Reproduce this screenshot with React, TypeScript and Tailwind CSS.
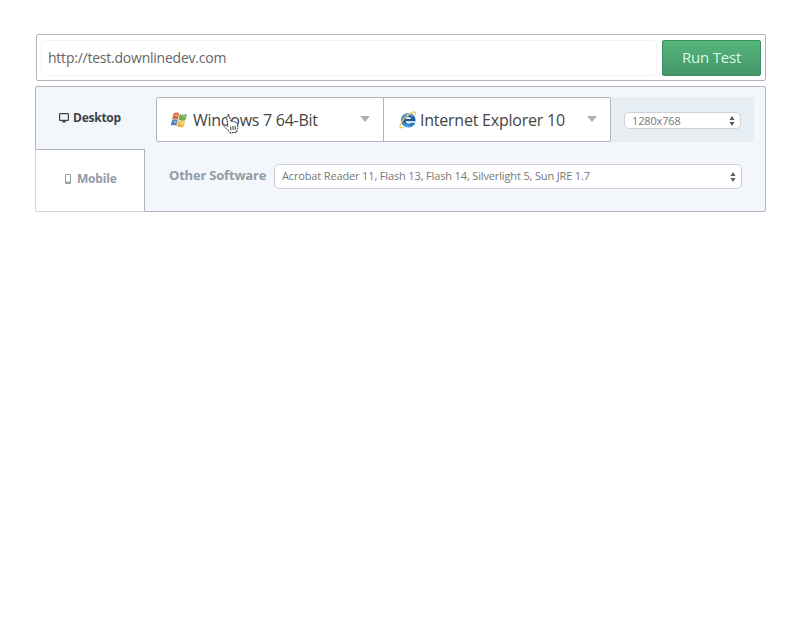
import React from "react";

function DesktopIcon() {
  return (
    <svg width="10" height="10" viewBox="0 0 10 10" fill="none" className="block shrink-0">
      <rect x="0.6" y="0.7" width="8.8" height="6.6" rx="0.4" stroke="#3d4247" strokeWidth="1.2" />
      <path d="M4 7.2h2v1.2h1.2v1H2.8v-1H4z" fill="#3d4247" />
    </svg>
  );
}

function MobileIcon() {
  return (
    <svg width="6" height="10" viewBox="0 0 6 10" fill="none" className="block shrink-0">
      <rect x="0.5" y="0.5" width="5" height="9" rx="0.4" stroke="#929ba6" />
      <path d="M0.5 7.5h5v1.600h-5z" fill="#929ba6" />
      <path d="M2.500 8h1v0.800h-1z" fill="#fff" />
    </svg>
  );
}

function WindowsIcon() {
  return (
    <svg width="16" height="16" viewBox="0 0 16 16" className="block shrink-0">
      <path d="M2.500 1.700C4.200.300 6.300.300 8.100 1.400L6.800 7.400C5 6.400 3 6.400 1.100 7.500z" fill="#dc6840" />
      <path d="M8.800 1.900c2.100 1.100 4.600 1.300 7.100.2L14.400 8.100c-2.200 1-4.900.8-7-.3z" fill="#77ac4b" />
      <path d="M1 8.100C2.800 7 4.900 6.900 6.600 7.900L5.300 13.700C3.600 12.600 1.700 12.700-.2 13.700z" fill="#4d80bd" />
      <path d="M7.300 8.400c2.100 1.100 4.500 1.300 6.800.4l-1.400 6c-2.400.9-4.900.5-6.900-.6z" fill="#efb83c" />
      <path d="M3.200 2.900c1.200-.7 2.500-.6 3.600-.1l-.5 2.200z" fill="#f3a684" />
      <path d="M9.500 3.300c1.500.6 3 .7 4.600.3l-.5 1.800z" fill="#a5cc78" />
      <path d="M1.900 9.200c1-.5 2.500-.5 3.500 0l-.6 2.200z" fill="#8fb8e0" />
      <path d="M8 9.800c1.500.6 3 .8 4.600.5l-.7 2.700z" fill="#ffe69a" />
    </svg>
  );
}

function ExplorerIcon() {
  return (
    <svg width="18" height="18" viewBox="0 0 18 18" fill="none" className="block shrink-0">
      <defs>
        <linearGradient id="ieBlue" x1="0" y1="0" x2="0" y2="1">
          <stop offset="0" stopColor="#4587c2" />
          <stop offset="0.45" stopColor="#17549b" />
          <stop offset="1" stopColor="#3b9bdd" />
        </linearGradient>
      </defs>
      <path
        d="M16.600 10.300H6.800c.1 1.500 1.200 2.300 2.700 2.300 1 0 1.800-.3 2.200-.9h4.600c-.9 3-3.500 4.800-6.800 4.800-4.300 0-7.300-3-7.300-7.200s3-7.200 7.300-7.200 7.200 3.100 7.100 8.200zM6.900 8h5.100c-.1-1.200-1.100-2-2.500-2S7 6.800 6.900 8z"
        fill="url(#ieBlue)"
      />
      <path d="M3.300 8.700C3.900 5.500 6.200 3.400 9.400 3.300c1.700 0 3.200.6 4.200 1.600" stroke="#8fc5ee" strokeWidth="1" />
      <path d="M4 12c1 2 3 3.200 5.500 3.200" stroke="#63b7ec" strokeWidth="0.9" />
      <path
        d="M16.200 4.300C17 2 16.200.7 14.300 1 10.400 1.800 3.900 8 1.700 12.900c-1.500 3.400-.4 4.900 3 3.100"
        stroke="#e9c766"
        strokeWidth="1.300"
      />
    </svg>
  );
}

function HandCursor() {
  return (
    <svg width="16" height="19" viewBox="0 0 16 19" className="absolute left-[66px] top-[17px]">
      <path
        d="M4.400 1.300C5.400.7 6.200 1.200 6.600 2.200L8.400 6.700c.5-.8 1.600-.8 2 .1.700-.6 1.600-.3 1.900.5.800-.4 1.600 0 1.800.9l.7 3.300c.3 1.600-.4 2.700-1 3.800l.1 1.700-6.700 1.100-.8-1.700C4.500 15.300 3 13.300 1.200 11.600c-.8-.8.3-2 1.500-1.400l2.200 1.300L3.700 2.700c-.1-.6.200-1.100.7-1.400z"
        fill="#fff"
        stroke="#222"
        strokeWidth="1"
        strokeDasharray="2 0.700"
      />
      <path d="M7.500 11.500l.5 3.800M9.800 11.200l.5 3.800M12 10.800l.4 3.800" stroke="#222" strokeWidth="0.9" />
    </svg>
  );
}

function Arrow() {
  return (
    <svg width="10" height="6" viewBox="0 0 10 6" className="mb-px block shrink-0">
      <path d="M0 0h10L5 6z" fill="#a9b0b7" />
    </svg>
  );
}

function Stepper() {
  return (
    <svg width="6" height="10" viewBox="0 0 6 10" className="block shrink-0">
      <path d="M3 0l2.500 4h-5zM3 10L.5 6h5z" fill="#55595d" />
    </svg>
  );
}

export default function App() {
  return (
    <main className="h-[642px] w-[800px] overflow-hidden bg-white pl-[35px] pt-[34px] font-['Open_Sans','Noto_Sans',sans-serif] antialiased">
      <div className="ml-px flex h-[47px] w-[730px] items-center justify-between rounded-[2px] border border-[#b0b5bd] px-1">
        <div className="flex h-9 w-[616px] items-center rounded-[3px] border border-[#f3f4f5] px-1.5">
          <span className="whitespace-nowrap text-[14px] leading-5 tracking-[-0.23px] text-[#666]">http://test.downlinedev.com</span>
        </div>
        <button className="h-9 w-[99px] whitespace-nowrap rounded-[2px] border border-[#3d8c5f] bg-linear-to-b from-[#54b57a] to-[#43976a] pb-0.5 text-[15px] leading-5 tracking-[-0.2px] text-[#d9f8e5]">
          Run Test
        </button>
      </div>

      <div className="mt-[5px] flex h-[126px] w-[731px] rounded-[2px] border border-[#b0b5bd] bg-[#f3f7fc]">
        <nav className="-mb-px -ml-px flex w-[110px] shrink-0 flex-col">
          <div className="flex h-[62px] items-center gap-1 pl-6 text-[12px] font-bold tracking-[-0.25px] text-[#3d4247]">
            <DesktopIcon />
            <span>Desktop</span>
          </div>
          <div className="flex h-[63px] items-center gap-1.5 rounded-bl-[2px] border border-b-[#d5d7da] border-l-[#d5d7da] border-r-[#b0b5bd] border-t-[#b0b5bd] bg-white pb-1 pl-[29px] text-[12px] font-bold tracking-[-0.2px] text-[#929ba6]">
            <MobileIcon />
            <span>Mobile</span>
          </div>
        </nav>

        <section className="flex flex-1 flex-col pl-[11px] pr-[11px] pt-[10px]">
          <div className="flex h-[45px] rounded-[2px] bg-[#e6edf3]">
            <div className="relative flex w-[228px] items-center rounded-l-[2px] border border-[#b0b5bd] bg-white pl-[14px] pr-[13px]">
              <WindowsIcon />
              <span className="ml-1.5 flex-1 whitespace-nowrap text-[16px] tracking-[-0.27px] text-[#444]">Windows 7 64-Bit</span>
              <Arrow />
              <HandCursor />
            </div>
            <div className="-ml-px flex w-[228px] items-center rounded-r-[2px] border border-[#b0b5bd] bg-white pl-[15px] pr-[13px]">
              <ExplorerIcon />
              <span className="ml-[3px] flex-1 whitespace-nowrap text-[16px] tracking-[-0.23px] text-[#444]">Internet Explorer 10</span>
              <Arrow />
            </div>
            <div className="ml-[13px] mt-[15px] flex h-[17px] w-[117px] items-center justify-between rounded-[5px] border border-[#cfd1d4] bg-white pl-[7px] pr-[5px] text-[11px] leading-none tracking-[-0.15px] text-[#777]">
              <span className="-mt-px">1280x768</span>
              <Stepper />
            </div>
          </div>
          <div className="mt-[22px] flex h-[25px] items-center pl-[13px]">
            <span className="w-[105px] whitespace-nowrap pb-px text-[13px] font-bold tracking-[-0.2px] text-[#929ba6]">Other Software</span>
            <div className="flex h-[25px] w-[468px] items-center justify-between rounded-[5px] border border-[#cfd1d4] bg-white pl-[7px] pr-[5px] text-[11px] tracking-[-0.145px] text-[#777]">
              <span className="whitespace-nowrap">Acrobat Reader 11, Flash 13, Flash 14, Silverlight 5, Sun JRE 1.7</span>
              <Stepper />
            </div>
          </div>
        </section>
      </div>
    </main>
  );
}
